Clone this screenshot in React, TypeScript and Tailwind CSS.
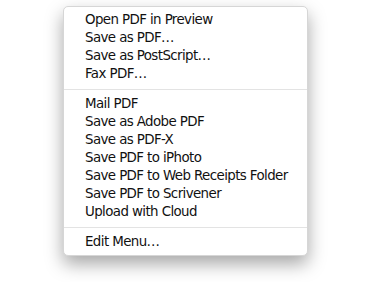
const GROUPS: string[][] = [
  ['Open PDF in Preview', 'Save as PDF…', 'Save as PostScript…', 'Fax PDF…'],
  [
    'Mail PDF',
    'Save as Adobe PDF',
    'Save as PDF-X',
    'Save PDF to iPhoto',
    'Save PDF to Web Receipts Folder',
    'Save PDF to Scrivener',
    'Upload with Cloud',
  ],
  ['Edit Menu…'],
];

export default function App() {
  return (
    <div className="w-[376px] h-[282px] bg-white pt-[6px] pl-[63px]">
      <div
        className="w-[245px] py-[4px] bg-white rounded-[5px] border border-[#d6d6d6] shadow-[0_8px_18px_rgba(0,0,0,0.35)] text-[#111] text-[13.4px] tracking-[-0.6px]"
        style={{ fontFamily: '"DejaVu Sans", sans-serif' }}
      >
        {GROUPS.map((group, gi) => (
          <div key={gi}>
            {gi > 0 && (
              <div className="h-[12px] flex items-center">
                <div className="h-px w-full bg-[#e3e3e3]" />
              </div>
            )}
            {group.map((label) => (
              <div key={label} className="h-[18px] leading-[18px] pl-[21px] whitespace-nowrap">
                {label}
              </div>
            ))}
          </div>
        ))}
      </div>
    </div>
  );
}
